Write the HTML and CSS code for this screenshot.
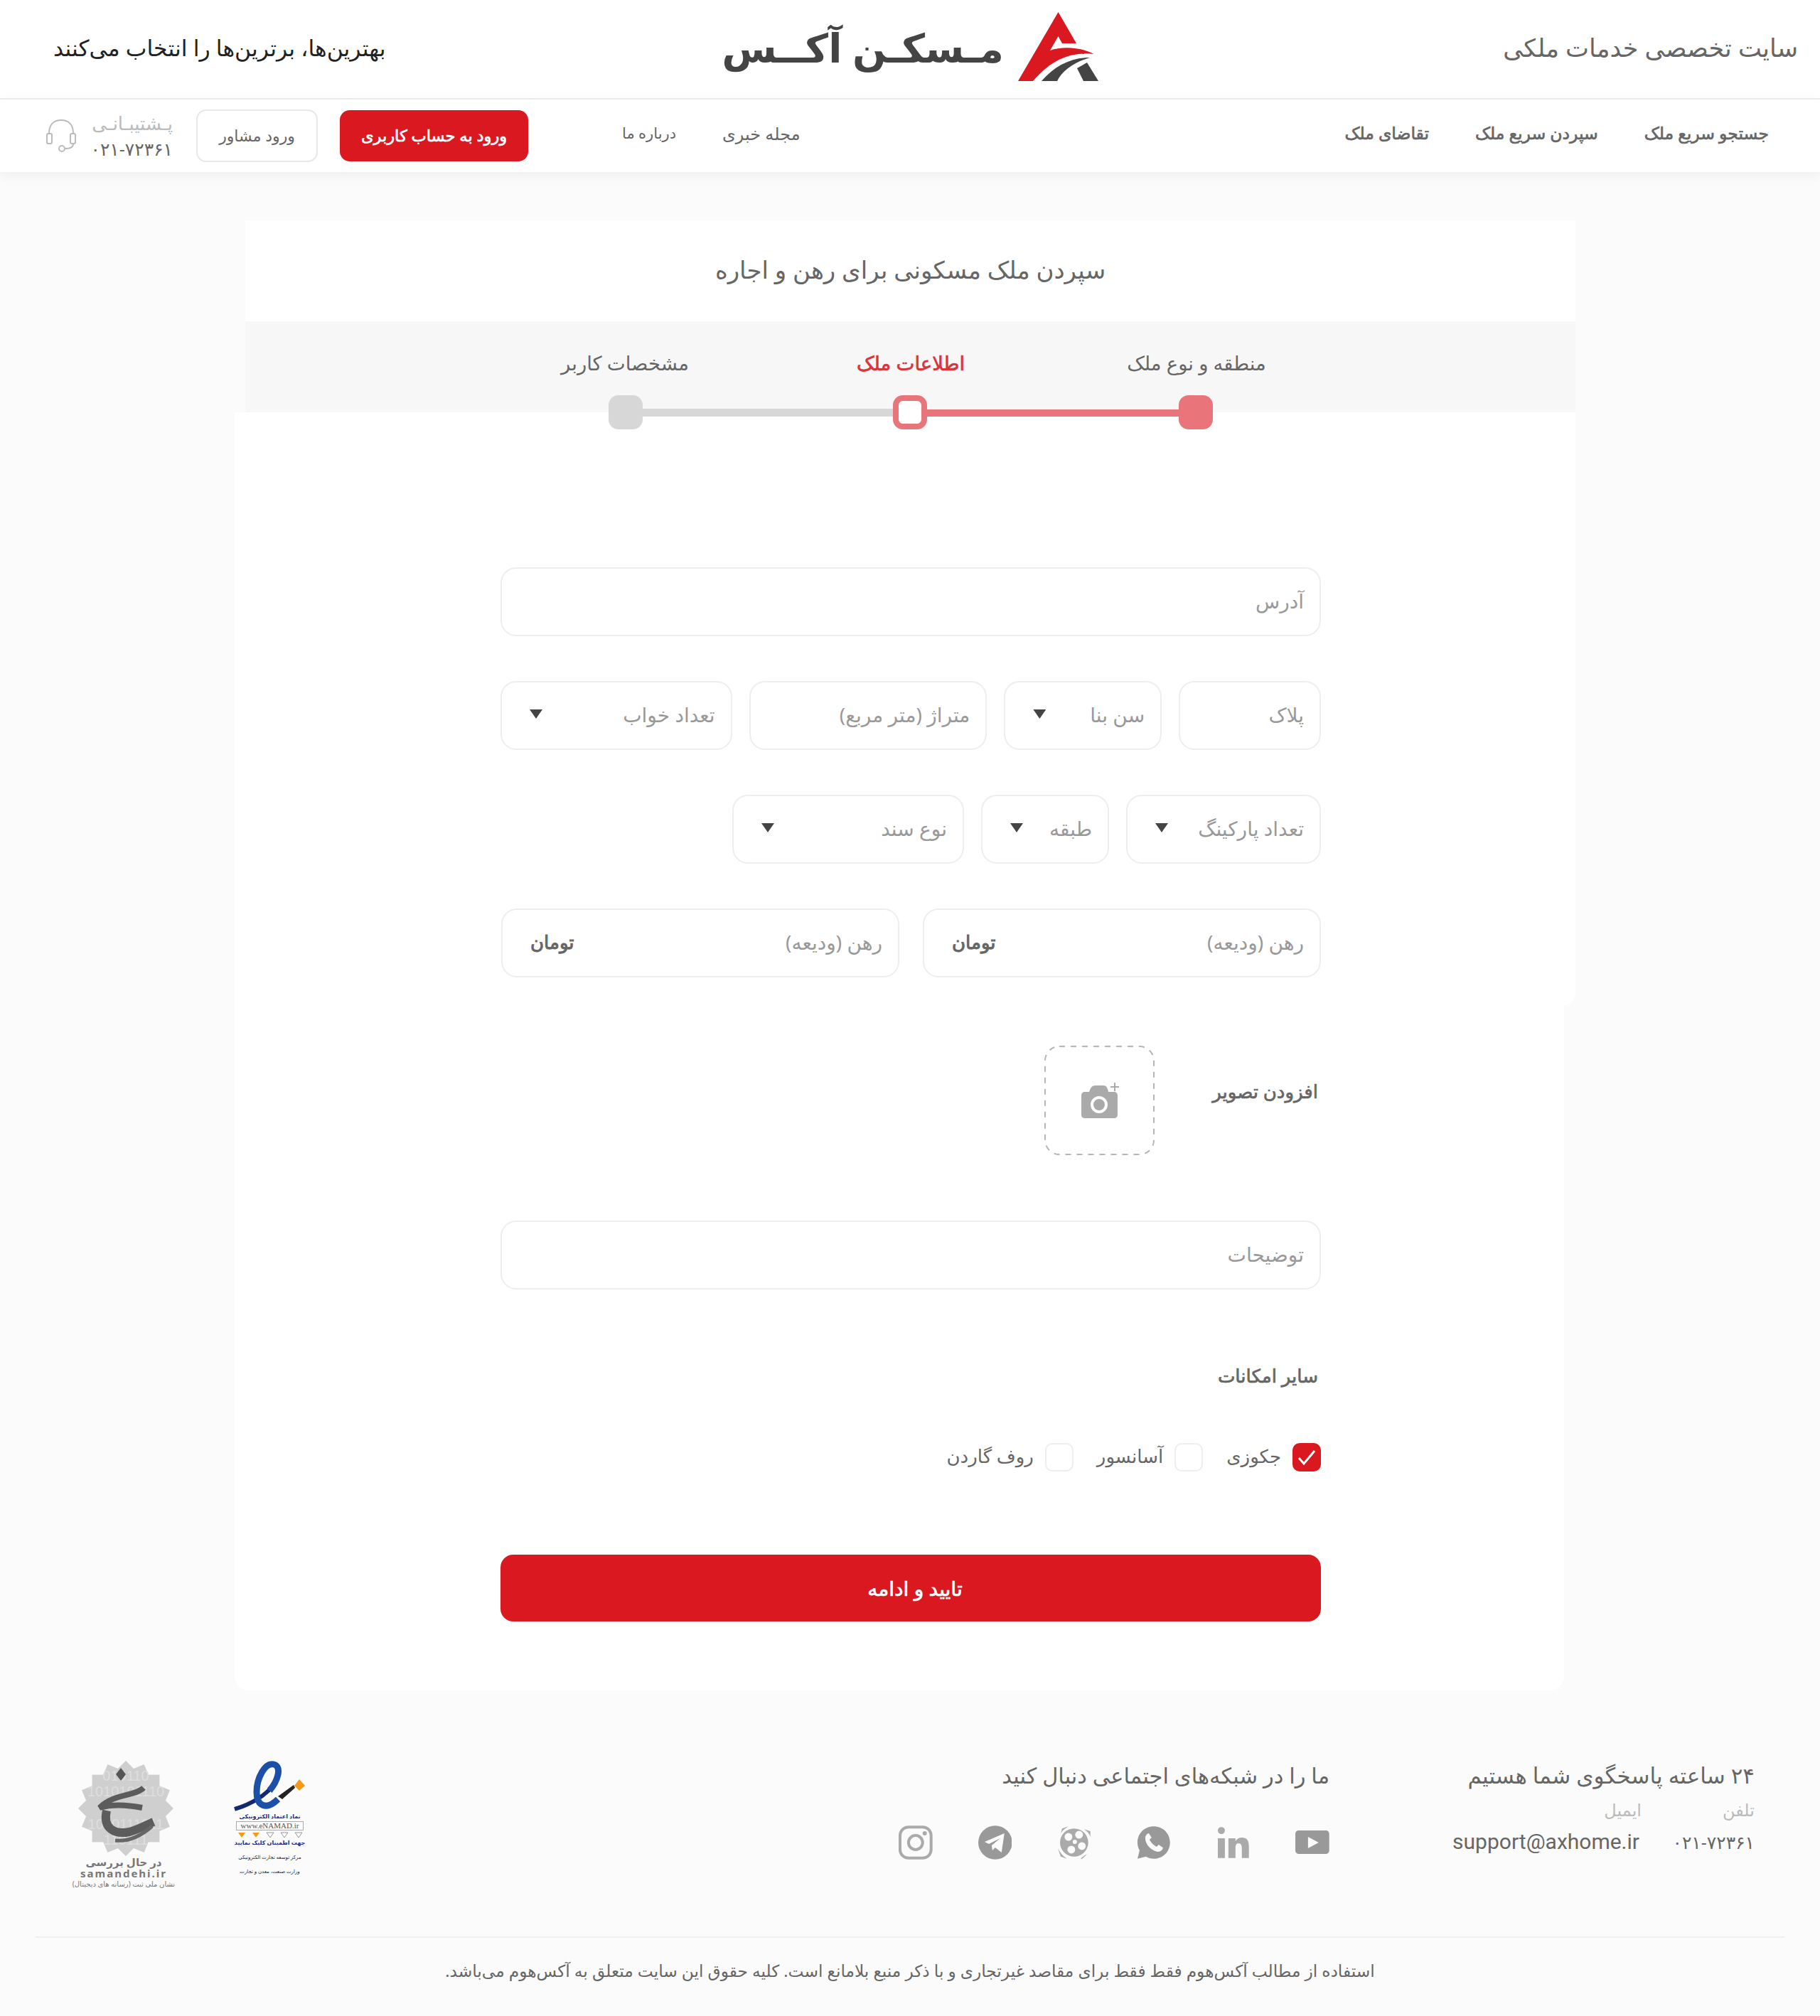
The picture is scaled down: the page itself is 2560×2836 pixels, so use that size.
FILE: index.html
```html
<!DOCTYPE html>
<html lang="fa" dir="rtl">
<head>
    <meta charset="UTF-8">
    <title>مسکن آکس</title>
    <link rel="stylesheet" href="styles.css">
</head>
<body>
    <header class="top-bar">
        <div class="top-bar-right">سایت تخصصی خدمات ملکی</div>
        <div class="logo">
            <svg class="logo-mark" width="113" height="98" viewBox="0 0 113 98">
                <path fill="#d9181f" d="M56.500 1L82 45H62L56.500 35L45 55C62 49 88 50 106.500 60C78 57 50 64 21 98H0Z"/>
                <path fill="#444" d="M101 65C75 65 52 76 33 98H55C62 84 78 72 101 65Z"/>
                <path fill="#444" d="M97 72L83 80L92 98H113Z"/>
            </svg>
            <span class="logo-text">مـسکـن آکــس</span>
        </div>
        <div class="top-bar-left">بهترین‌ها، برترین‌ها را انتخاب می‌کنند</div>
    </header>

    <nav class="nav-bar">
        <a class="nav-link nav-strong" href="#">جستجو سریع ملک</a>
        <a class="nav-link nav-strong" href="#">سپردن سریع ملک</a>
        <a class="nav-link nav-strong" href="#">تقاضای ملک</a>
        <a class="nav-link nav-news" href="#">مجله خبری</a>
        <a class="nav-link nav-about" href="#">درباره ما</a>
        <a class="btn-login" href="#">ورود به حساب کاربری</a>
        <a class="btn-agent" href="#">ورود مشاور</a>
        <div class="support">
            <span class="support-label">پـشتیبـانـی</span>
            <span class="support-phone">۰۲۱-۷۲۳۶۱</span>
        </div>
        <svg class="support-icon" width="42" height="46" viewBox="0 0 42 46" fill="none" stroke="#bbb" stroke-width="2">
            <path d="M4 20C4 8 10 1 21 1S38 8 38 20"/>
            <rect x="1" y="20" width="7" height="14" rx="2"/>
            <rect x="34" y="20" width="7" height="14" rx="2"/>
            <path d="M38 34C38 39 33 41 27 41"/>
            <circle cx="22" cy="41" r="4"/>
        </svg>
    </nav>

    <main class="content">
        <section class="card-head">
            <h1 class="card-title">سپردن ملک مسکونی برای رهن و اجاره</h1>
            <div class="steps-band">
                <span class="step-label">منطقه و نوع ملک</span>
                <span class="step-label step-active">اطلاعات ملک</span>
                <span class="step-label">مشخصات کاربر</span>
            </div>
        </section>

        <section class="card-form">
            <div class="stepper">
                <span class="dot dot-done"></span>
                <span class="line line-done"></span>
                <span class="dot dot-current"></span>
                <span class="line line-todo"></span>
                <span class="dot dot-todo"></span>
            </div>

            <div class="form-row row-address">
                <div class="field field-full"><span class="ph">آدرس</span></div>
            </div>
            <div class="form-row">
                <div class="field w-200"><span class="ph">پلاک</span></div>
                <div class="field w-222"><span class="ph">سن بنا</span><i class="arrow"></i></div>
                <div class="field w-335"><span class="ph">متراژ (متر مربع)</span></div>
                <div class="field w-326"><span class="ph">تعداد خواب</span><i class="arrow"></i></div>
            </div>
            <div class="form-row">
                <div class="field w-274"><span class="ph">تعداد پارکینگ</span><i class="arrow"></i></div>
                <div class="field w-180"><span class="ph">طبقه</span><i class="arrow"></i></div>
                <div class="field w-326"><span class="ph">نوع سند</span><i class="arrow"></i></div>
            </div>
            <div class="form-row row-price">
                <div class="field w-560"><span class="ph">رهن (ودیعه)</span><b class="unit">تومان</b></div>
                <div class="field w-560"><span class="ph">رهن (ودیعه)</span><b class="unit">تومان</b></div>
            </div>

            <div class="upload-row">
                <span class="section-label">افزودن تصویر</span>
                <div class="upload-box">
                    <svg width="155" height="154" viewBox="0 0 155 154">
                        <rect x="1" y="1" width="153" height="152" rx="20" fill="none" stroke="#b5b5b5" stroke-width="2" stroke-dasharray="8 8"/>
                        <g transform="translate(52 52)">
                            <path fill="#aaa" d="M5 13H11C13 7 15 4 20 4H31C35 4 37 7 38 13H46C49 13 51 15 51 18V45C51 48 49 50 46 50H5C2 50 0 48 0 45V18C0 15 2 13 5 13Z"/>
                            <circle cx="25" cy="31" r="10" fill="#aaa" stroke="#fff" stroke-width="4"/>
                            <path fill="none" stroke="#fff" stroke-width="6" d="M47 2V10M43 6H51"/>
                            <path fill="none" stroke="#aaa" stroke-width="2" d="M47 0V12M41 6H53"/>
                        </g>
                    </svg>
                </div>
            </div>

            <div class="form-row row-notes">
                <div class="field field-full"><span class="ph">توضیحات</span></div>
            </div>

            <div class="section-label facilities-title">سایر امکانات</div>
            <div class="checks">
                <label class="check"><span class="box box-on"><svg width="28" height="24" viewBox="0 0 28 24" fill="none" stroke="#fff" stroke-width="3"><path d="M3 13L10 21L25 3"/></svg></span><span class="check-text">جکوزی</span></label>
                <label class="check"><span class="box"></span><span class="check-text">آسانسور</span></label>
                <label class="check"><span class="box"></span><span class="check-text">روف گاردن</span></label>
            </div>

            <a class="btn-submit" href="#">تایید و ادامه</a>
        </section>
    </main>

    <footer class="footer">
        <div class="footer-main">
            <div class="contact">
                <div class="footer-title">۲۴ ساعته پاسخگوی شما هستیم</div>
                <div class="contact-cols">
                    <div class="contact-col contact-phone">
                        <span class="contact-label">تلفن</span>
                        <span class="contact-value phone">۰۲۱-۷۲۳۶۱</span>
                    </div>
                    <div class="contact-col">
                        <span class="contact-label">ایمیل</span>
                        <span class="contact-value email">support@axhome.ir</span>
                    </div>
                </div>
            </div>
            <div class="social">
                <div class="footer-title">ما را در شبکه‌های اجتماعی دنبال کنید</div>
                <div class="social-icons">
                    <svg width="48" height="48" viewBox="0 0 48 48"><path fill="#999" d="M5 7H43C46 7 48 9 48 12V35C48 38 46 40 43 40H5C2 40 0 38 0 35V12C0 9 2 7 5 7Z"/><path fill="#fbfbfb" d="M18 16L33 24L18 32Z"/></svg>
                    <svg width="48" height="48" viewBox="0 0 48 48"><path fill="#aaa" d="M2 18H12V46H2ZM7 2A5 5 0 1 1 7 12A5 5 0 0 1 7 2ZM17 18H27V22C29 19 32 17 36 17C44 17 46 22 46 30V46H36V32C36 28 35 25 31 25C28 25 27 28 27 32V46H17Z"/></svg>
                    <svg width="48" height="48" viewBox="0 0 48 48"><path fill="#999" d="M24 1C37 1 47 11 47 24S37 47 24 47C20 47 16 46 13 44L1 47L4 35C2 32 1 28 1 24C1 11 11 1 24 1Z"/><path fill="#fbfbfb" d="M17 11C15 11 12 14 12 18C12 27 21 36 30 37C34 37 37 34 37 31L31 27L28 30C24 28 20 24 18 20L21 17Z"/></svg>
                    <svg width="48" height="48" viewBox="0 0 48 48"><circle cx="24" cy="24" r="20" fill="#aaa"/><circle cx="16" cy="16" r="5.500" fill="#fbfbfb"/><circle cx="31" cy="13" r="5.500" fill="#fbfbfb"/><circle cx="35" cy="29" r="5.500" fill="#fbfbfb"/><circle cx="20" cy="34" r="5.500" fill="#fbfbfb"/><circle cx="25" cy="23" r="3" fill="#fbfbfb"/><path fill="#aaa" d="M7 4L16 1L10 5C8 7 6 9 5 12ZM38 5L47 8L47 16C46 12 43 8 38 5ZM1 32L5 44L14 47C8 43 4 38 1 32ZM34 46L42 40C40 43 38 45 34 48Z"/></svg>
                    <svg width="48" height="48" viewBox="0 0 48 48"><circle cx="24" cy="24" r="24" fill="#999"/><path fill="#fbfbfb" d="M9 23L37 11L33 38L24 31L20 35L19 28L31 18L15 26Z"/></svg>
                    <svg width="48" height="48" viewBox="0 0 48 48" fill="none" stroke="#aaa" stroke-width="4"><rect x="2" y="2" width="44" height="44" rx="12"/><circle cx="24" cy="24" r="10"/><circle cx="37" cy="11" r="3" fill="#aaa" stroke="none"/></svg>
                </div>
            </div>
            <div class="badges">
                <div class="badge-enamad">
                    <svg width="101" height="72" viewBox="0 0 101 72">
                        <path fill="none" stroke="#14286e" stroke-width="6" d="M1 68C14 64 40 54 56 34"/>
                        <path fill="none" stroke="#1c4fa8" stroke-width="9" d="M50 42C62 28 68 8 56 5C44 2 32 24 32 44C32 64 46 70 62 54"/>
                        <path fill="#222" d="M62 50L84 34L86 38L68 54Z"/>
                        <path fill="#f49a1a" d="M92 26L100 35L92 42L85 35Z"/>
                    </svg>
                    <span class="enamad-line">نماد اعتماد الکترونیکی</span>
                    <span class="enamad-url">www.eNAMAD.ir</span>
                    <svg class="enamad-stars" width="90" height="10" viewBox="0 0 90 10">
                        <path fill="#f49a1a" d="M0 2H10L5 9Z"/>
                        <path fill="#f49a1a" d="M20 2H30L25 9Z"/>
                        <path fill="none" stroke="#999" d="M40 2H50L45 9Z"/>
                        <path fill="none" stroke="#999" d="M60 2H70L65 9Z"/>
                        <path fill="none" stroke="#999" d="M80 2H90L85 9Z"/>
                    </svg>
                    <span class="enamad-line">جهت اطمینان کلیک نمایید</span>
                    <span class="enamad-sign sign-first">مرکز توسعه تجارت الکترونیکی</span>
                    <span class="enamad-sign">وزارت صنعت، معدن و تجارت</span>
                </div>
                <div class="badge-samandehi">
                    <svg width="134" height="134" viewBox="0 0 134 134">
                        <g fill="#cfcfcf">
                            <rect x="19.600" y="19.600" width="94.800" height="94.800"/>
                            <rect x="19.600" y="19.600" width="94.800" height="94.800" transform="rotate(22.500 67 67)"/>
                            <rect x="19.600" y="19.600" width="94.800" height="94.800" transform="rotate(45 67 67)"/>
                            <rect x="19.600" y="19.600" width="94.800" height="94.800" transform="rotate(67.500 67 67)"/>
                        </g>
                        <g class="sam-digits" fill="#dedede" font-size="20">
                            <text x="67" y="28" text-anchor="middle">010110</text>
                            <text x="67" y="50" text-anchor="middle">1010101110</text>
                            <text x="67" y="96" text-anchor="middle">1010111011</text>
                            <text x="67" y="118" text-anchor="middle">110111</text>
                        </g>
                        <path fill="#555" d="M60 10L67 19L60 28L53 19Z"/>
                        <path fill="none" stroke="#5c5c5c" stroke-width="8" d="M92 38C80 50 50 46 30 66C50 60 70 62 90 66"/>
                        <path fill="none" stroke="#5c5c5c" stroke-width="12" d="M40 70C34 96 52 104 72 100C86 96 96 90 106 86"/>
                        <path fill="none" stroke="#666" stroke-width="5" d="M52 112C70 114 88 106 104 92"/>
                    </svg>
                    <span class="sam-a">در حال بررسی</span>
                    <span class="sam-b">samandehi.ir</span>
                    <span class="sam-c">نشان ملی ثبت (رسانه های دیجیتال)</span>
                </div>
            </div>
        </div>
        <div class="footer-copy">استفاده از مطالب آکس‌هوم فقط فقط برای مقاصد غیرتجاری و با ذکر منبع بلامانع است. کلیه حقوق این سایت متعلق  به آکس‌هوم می‌باشد.</div>
    </footer>
</body>
</html>
```
FILE: styles.css
```css
/* Universal Styling */
* {
    margin: 0;
    padding: 0;
    box-sizing: border-box;
    font-family: "Noto Sans", "DejaVu Sans", sans-serif;
}

body {
    background: #fbfbfb;
    color: #666;
    width: 2560px;
    height: 2836px;
    overflow: hidden;
}

a {
    text-decoration: none;
    color: inherit;
}

/* Top Bar */
.top-bar {
    display: grid;
    grid-template-columns: 1fr auto 1fr;
    align-items: center;
    height: 140px;
    padding-bottom: 6px;
    background: #fff;
    border-bottom: 2px solid #eee;
}

.top-bar-right {
    padding-right: 31px;
    font-size: 35px;
    color: #666;
}

.top-bar-left {
    padding-left: 75px;
    font-size: 31.500px;
    color: #222;
    text-align: left;
}

.logo {
    display: flex;
    align-items: center;
    gap: 20px;
}

.logo-mark {
    margin-top: -2px;
}

.logo-text {
    font-size: 56px;
    font-weight: 700;
    color: #444;
}

/* Nav */
.nav-bar {
    display: flex;
    align-items: center;
    height: 102px;
    padding: 0 72px 0 65px;
    background: #fff;
    box-shadow: 0 4px 16px rgba(0, 0, 0, 0.06);
    position: relative;
}

.nav-link {
    margin-left: 65px;
    padding-bottom: 8px;
    font-size: 24px;
}

.nav-strong {
    font-size: 23.500px;
    -webkit-text-stroke: 0.7px currentColor;
}

.nav-news {
    margin-right: auto;
}

.nav-about {
    font-size: 21px;
}

.btn-login {
    display: flex;
    align-items: center;
    justify-content: center;
    width: 265px;
    height: 72px;
    margin-right: 67px;
    padding-bottom: 2px;
    background: #d9181f;
    border-radius: 14px;
    color: #fff;
    font-size: 22.500px;
    -webkit-text-stroke: 0.7px currentColor;
}

.btn-agent {
    display: flex;
    align-items: center;
    justify-content: center;
    width: 171px;
    height: 74px;
    margin-right: 31px;
    padding-bottom: 2px;
    border: 2px solid #e8e8e8;
    border-radius: 14px;
    font-size: 22px;
}

.support {
    display: flex;
    flex-direction: column;
    width: 113px;
    margin-right: 33px;
    line-height: 36px;
}

.support-label {
    font-size: 26px;
    color: #bbb;
    white-space: nowrap;
}

.support-phone {
    font-size: 25px;
    white-space: nowrap;
}

.support-icon {
    margin-right: 23px;
}

/* Card */
.content {
    height: 2136px;
    padding-top: 68px;
}

.card-head {
    width: 1871px;
    height: 1105px;
    margin-right: 344px;
    background: #fff;
    border-radius: 0 0 20px 20px;
}

.card-title {
    display: flex;
    align-items: center;
    justify-content: center;
    height: 142px;
    padding-bottom: 4px;
    font-size: 34px;
    font-weight: 400;
}

.steps-band {
    display: flex;
    height: 128px;
    padding-top: 40px;
    background: #f7f7f7;
}

.step-label {
    width: 402px;
    font-size: 27.500px;
    text-align: center;
}

.step-label:first-child {
    margin-right: 332px;
}

.step-active {
    color: #d9333b;
    -webkit-text-stroke: 0.7px currentColor;
}

.card-form {
    display: flow-root;
    position: relative;
    width: 1870px;
    height: 1798px;
    margin-top: -835px;
    margin-right: 360px;
    padding: 0 342px 0 374px;
    border-radius: 0 0 20px 20px;
    background: #fff;
}

/* Stepper */
.stepper {
    display: flex;
    align-items: center;
    width: 850px;
    height: 48px;
    margin: -24px 152px 0 0;
}

.dot {
    width: 48px;
    height: 48px;
    border-radius: 14px;
    flex: none;
}

.dot-done {
    background: #e9747a;
}

.dot-current {
    background: #fff;
    border: 8px solid #e9747a;
}

.dot-todo {
    background: #d7d7d7;
}

.line {
    height: 10px;
}

.line-done {
    flex: none;
    width: 354px;
    margin-top: 2px;
    background: #e9747a;
}

.line-todo {
    flex: 1;
    height: 11px;
    background: #d7d7d7;
}

/* Form */
.form-row {
    display: flex;
    gap: 24px;
    margin-bottom: 63px;
}

.row-address {
    margin-top: 194px;
}

.row-price {
    gap: 33px;
    margin-bottom: 96px;
}

.row-notes {
    margin-bottom: 0;
}

.field {
    display: flex;
    align-items: center;
    justify-content: space-between;
    height: 97px;
    padding: 0 22px 4px 39px;
    border: 2px solid #eee;
    border-radius: 22px;
    background: #fff;
}

.field-full {
    width: 100%;
}

.w-180 { width: 180px; }
.w-200 { width: 200px; }
.w-222 { width: 222px; }
.w-274 { width: 274px; }
.w-326 { width: 326px; }
.w-335 { width: 335px; }
.w-560 { width: 560px; }

.ph {
    font-size: 28px;
    color: #999;
    white-space: nowrap;
}

.arrow {
    width: 18px;
    height: 13px;
    background: #444;
    clip-path: polygon(0 0, 100% 0, 50% 100%);
}

.unit {
    font-size: 26px;
    font-weight: 400;
    color: #666;
    -webkit-text-stroke: 1px currentColor;
}

.section-label {
    font-size: 26px;
    -webkit-text-stroke: 0.7px currentColor;
}

.upload-row {
    display: flex;
    align-items: flex-start;
    height: 154px;
    margin-bottom: 92px;
    padding-right: 4px;
}

.upload-row .section-label {
    width: 230px;
    margin-top: 46px;
}

.upload-box {
    width: 155px;
    height: 154px;
}

.facilities-title {
    margin-top: 103px;
    padding-right: 4px;
}

.checks {
    display: flex;
    gap: 33px;
    margin-top: 77px;
}

.check {
    display: flex;
    align-items: center;
    gap: 16px;
    font-size: 26px;
}

.check-text {
    padding-bottom: 4px;
}

.box {
    display: flex;
    align-items: center;
    justify-content: center;
    flex: none;
    width: 40px;
    height: 40px;
    border: 2px solid #eee;
    border-radius: 10px;
}

.box-on {
    background: #d9181f;
    border-color: #d9181f;
}

.btn-submit {
    display: flex;
    align-items: center;
    justify-content: center;
    height: 94px;
    margin-top: 117px;
    padding-left: 12px;
    background: #d9181f;
    border-radius: 18px;
    color: #fff;
    font-size: 28px;
    -webkit-text-stroke: 0.7px currentColor;
}

/* Footer */
.footer {
    padding: 0 50px;
}

.footer-main {
    display: flex;
    height: 346px;
    padding: 98px 42px 0 0;
}

.footer-title {
    font-size: 31px;
}

.contact {
    width: 598px;
}

.contact-cols {
    display: flex;
    margin-top: 11px;
}

.contact-col {
    display: flex;
    flex-direction: column;
    gap: 9px;
}

.contact-phone {
    width: 159px;
}

.contact-label {
    font-size: 24px;
    color: #bbb;
}

.contact-value {
    font-size: 30px;
    white-space: nowrap;
}

.phone {
    font-size: 25px;
    line-height: 41px;
}

.email {
    margin: 2px 3px 0 0;
    font-family: Roboto, sans-serif;
    direction: ltr;
}

.social {
    width: 606px;
}

.social .footer-title {
    font-size: 30.500px;
}

.social-icons {
    display: flex;
    gap: 64px;
    margin-top: 50px;
}

.badges {
    display: flex;
    gap: 84px;
    margin-right: auto;
    margin-top: 1px;
    padding-left: 53px;
}

.badge-enamad {
    display: flex;
    flex-direction: column;
    align-items: center;
    width: 101px;
    color: #1d2a8a;
    line-height: 12px;
}

.enamad-line {
    font-size: 8px;
    font-weight: 700;
    white-space: nowrap;
}

.enamad-url {
    width: 95px;
    height: 13px;
    margin-top: 1px;
    border: 1px solid #aaa;
    font-family: "Liberation Serif", serif;
    font-size: 11px;
    line-height: 11px;
    color: #555;
    text-align: center;
    direction: ltr;
}

.enamad-stars {
    margin-top: 1px;
}

.enamad-sign {
    margin-top: 8px;
    font-size: 7px;
    color: #223;
    white-space: nowrap;
}

.sign-first {
    margin-top: 9px;
}

.badge-samandehi {
    display: flex;
    flex-direction: column;
    align-items: center;
    width: 142px;
    color: #777;
}

.badge-samandehi svg {
    margin-left: 5px;
}

.sam-digits text {
    font-family: "Liberation Sans", sans-serif;
    direction: ltr;
}

.sam-a {
    font-size: 15px;
    font-weight: 700;
    line-height: 16px;
    white-space: nowrap;
}

.sam-b {
    font-size: 15px;
    font-weight: 700;
    line-height: 16px;
    letter-spacing: 2px;
}

.sam-c {
    font-size: 10px;
    line-height: 14px;
    white-space: nowrap;
}

.footer-copy {
    padding-top: 30px;
    border-top: 2px solid #f0f0f0;
    font-size: 23.300px;
    text-align: center;
}
```
